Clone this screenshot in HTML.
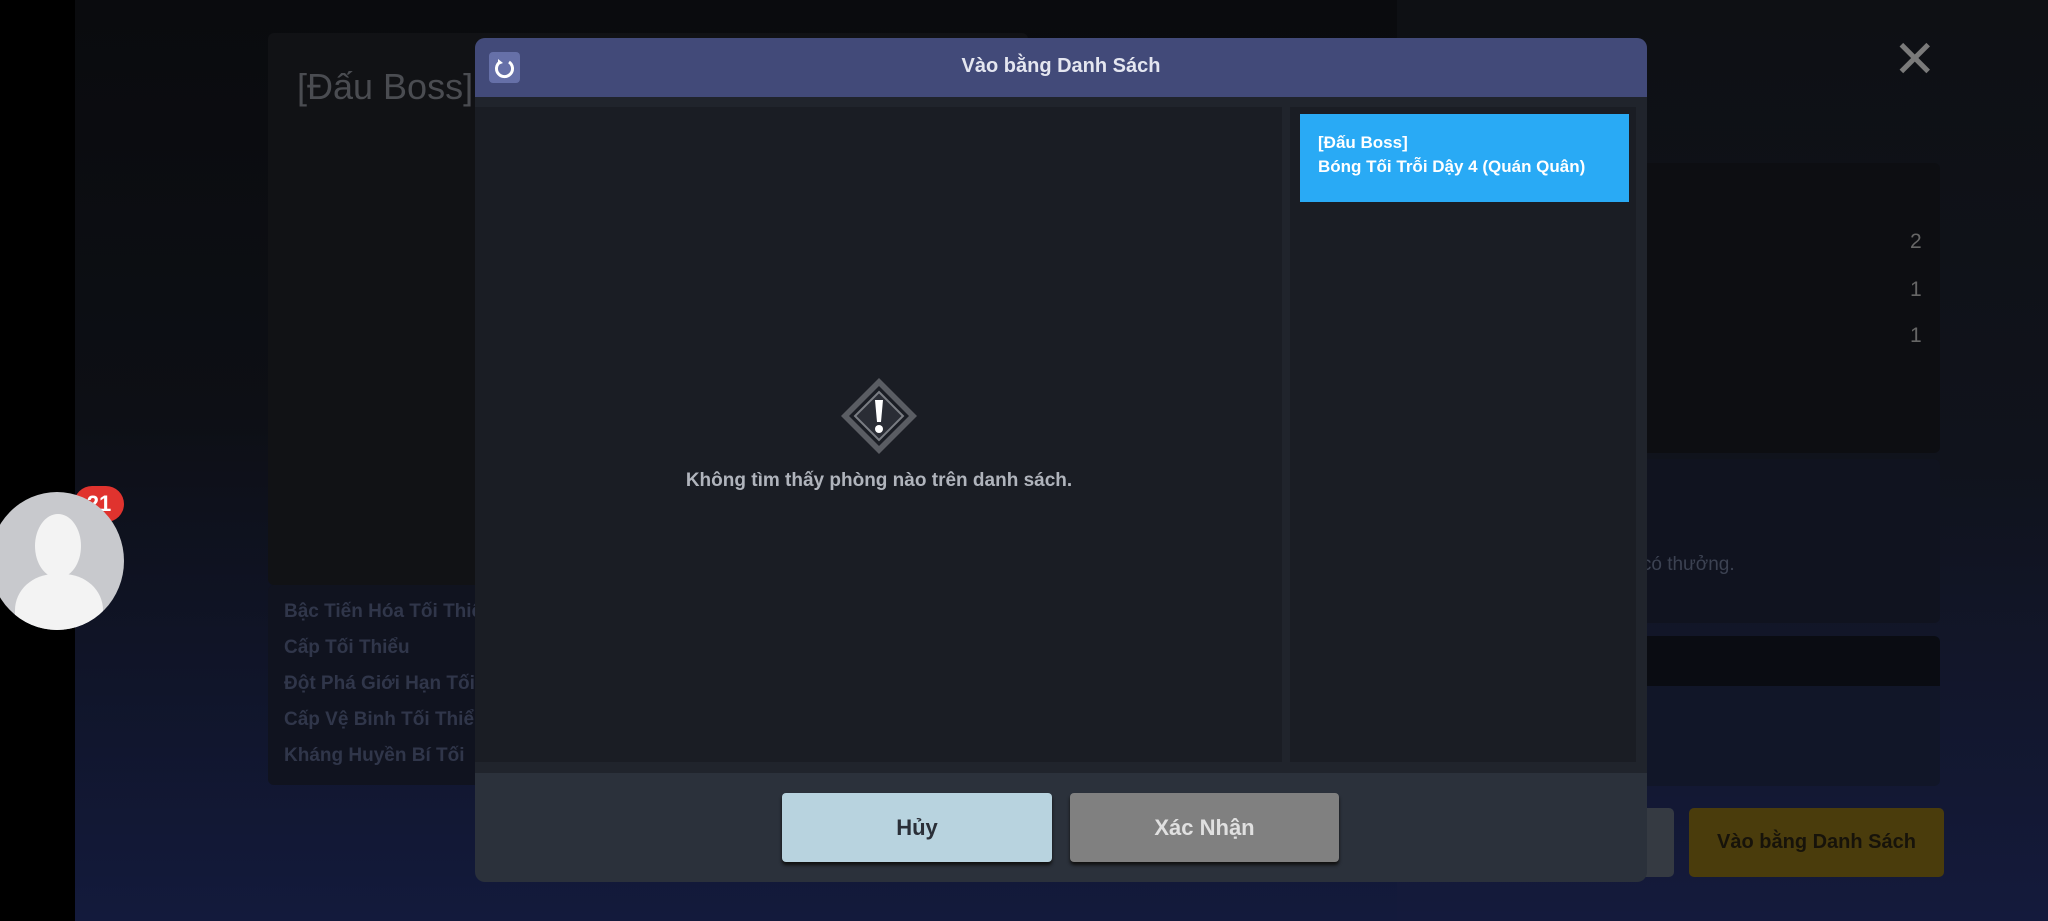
<!DOCTYPE html>
<html><head><meta charset="utf-8"><style>
*{margin:0;padding:0;box-sizing:border-box}
body{width:2048px;height:921px;overflow:hidden;position:relative;font-family:"Liberation Sans","DejaVu Sans",sans-serif;background:#000}
.abs{position:absolute}
#bg{left:75px;top:0;width:1973px;height:921px;background:linear-gradient(#0a0b0e 0%,#0d0f15 45%,#131a3c 100%)}
#bgr{left:1397px;top:0;width:651px;height:921px;background:linear-gradient(#0e1014 0%,#10131c 50%,#141a3c 100%)}
.txt{color:#30364a;font-size:19px;font-weight:bold}
</style></head><body>
<div id="bg" class="abs"></div>
<div id="bgr" class="abs"></div>
<div class="abs" style="left:268px;top:33px;width:760px;height:552px;background:#111215;border-radius:6px"></div>
<div class="abs" style="left:268px;top:585px;width:760px;height:200px;background:#10131f;border-radius:6px"></div>
<div class="abs" style="left:297px;top:66px;font-size:36px;color:#4a4c51">[Đấu Boss]</div>
<div class="abs txt" style="left:284px;top:601px">Bậc Tiến Hóa Tối Thiểu</div>
<div class="abs txt" style="left:284px;top:637px">Cấp Tối Thiểu</div>
<div class="abs txt" style="left:284px;top:673px">Đột Phá Giới Hạn Tối</div>
<div class="abs txt" style="left:284px;top:709px">Cấp Vệ Binh Tối Thiểu</div>
<div class="abs txt" style="left:284px;top:745px">Kháng Huyền Bí Tối</div>
<div class="abs" style="left:1893px;top:30px;font-size:52px;color:#7a7a7a;font-weight:bold">✕</div>
<div class="abs" style="left:1600px;top:163px;width:340px;height:290px;background:#0d0e12;border-radius:6px"></div>
<div class="abs" style="left:1910px;top:230px;font-size:21px;color:#666">2</div>
<div class="abs" style="left:1910px;top:278px;font-size:21px;color:#666">1</div>
<div class="abs" style="left:1910px;top:324px;font-size:21px;color:#666">1</div>
<div class="abs" style="left:1600px;top:459px;width:340px;height:164px;background:#10131f;border-radius:6px"></div>
<div class="abs" style="left:1626px;top:554px;font-size:19px;color:#3c4252">g có thưởng.</div>
<div class="abs" style="left:1600px;top:636px;width:340px;height:150px;background:#111628;border-radius:6px"></div>
<div class="abs" style="left:1600px;top:636px;width:340px;height:50px;background:#0a0c12;border-radius:6px 6px 0 0"></div>
<div class="abs" style="left:1620px;top:808px;width:54px;height:69px;background:#353a42;border-radius:5px"></div>
<div class="abs" style="left:1689px;top:808px;width:255px;height:69px;background:#4a3c0c;border-radius:5px;color:#17130a;font-weight:bold;font-size:20px;text-align:center;line-height:69px">Vào bằng Danh Sách</div>
<div class="abs" style="left:74px;top:486px;width:50px;height:36px;border-radius:18px;background:#e0332e;color:#fff;font-weight:bold;font-size:22px;line-height:36px;text-align:center">21</div>
<div class="abs" style="left:-10px;top:492px;width:134px;height:138px;border-radius:50%;background:#c8c9cd;overflow:hidden">
 <div class="abs" style="left:45px;top:22px;width:46px;height:64px;border-radius:50%;background:#f3f3f3"></div>
 <div class="abs" style="left:25px;top:82px;width:88px;height:80px;border-radius:45% 45% 0 0;background:#f3f3f3"></div>
</div>
<div class="abs" style="left:475px;top:38px;width:1172px;height:844px;background:#2b313b;border-radius:10px;overflow:hidden">
 <div class="abs" style="left:0;top:0;width:1172px;height:59px;background:#424a79"></div>
 <div class="abs" style="left:14px;top:14px;width:31px;height:31px;background:#6670a8;border-radius:4px">
  <svg width="31" height="31" viewBox="0 0 31 31"><path d="M11 10 A8 8 0 1 0 20 10" fill="none" stroke="#fff" stroke-width="3"/><path d="M9 7 L14 11 L9 13 Z" fill="#fff"/></svg>
 </div>
 <div class="abs" style="left:0;top:17px;width:1172px;text-align:center;color:#e4e6f0;font-size:20px;font-weight:bold">Vào bằng Danh Sách</div>
 <div class="abs" style="left:0;top:59px;width:1172px;height:676px;background:#20242c"></div>
 <div class="abs" style="left:0;top:69px;width:807px;height:655px;background:#1a1d24"></div>
 <div class="abs" style="left:815px;top:69px;width:346px;height:655px;background:#1a1d24"></div>
 <div class="abs" style="left:825px;top:76px;width:329px;height:88px;background:#29aaf5;color:#fff;font-weight:bold;font-size:17px;padding:17px 0 0 18px;line-height:24px">[Đấu Boss]<br>Bóng Tối Trỗi Dậy 4 (Quán Quân)</div>
 <svg class="abs" style="left:364px;top:338px" width="80" height="80" viewBox="0 0 80 80">
  <path d="M40 2 L78 40 L40 78 L2 40 Z" fill="#5a5d63"/>
  <path d="M40 10 L70 40 L40 70 L10 40 Z" fill="#1a1d24"/>
  <path d="M40 16 L64 40 L40 64 L16 40 Z" fill="#2a2d35" stroke="#7a7d83" stroke-width="2"/>
  <path d="M36 24 L44 24 L42 46 L38 46 Z" fill="#fff"/><circle cx="40" cy="53" r="4" fill="#fff"/>
 </svg>
 <div class="abs" style="left:0;top:432px;width:808px;text-align:center;color:#b0b4bc;font-size:19px;font-weight:bold">Không tìm thấy phòng nào trên danh sách.</div>
 <div class="abs" style="left:307px;top:755px;width:270px;height:69px;background:#b8d3df;border-radius:4px;color:#2a2f38;font-weight:bold;font-size:22px;text-align:center;line-height:69px;box-shadow:0 3px 3px #111">Hủy</div>
 <div class="abs" style="left:595px;top:755px;width:269px;height:69px;background:#808080;border-radius:4px;color:#e0e0e0;font-weight:bold;font-size:22px;text-align:center;line-height:69px;box-shadow:0 3px 3px #111">Xác Nhận</div>
</div>
</body></html>
